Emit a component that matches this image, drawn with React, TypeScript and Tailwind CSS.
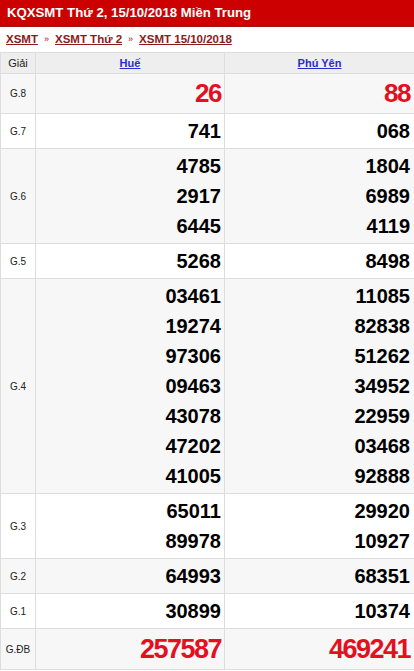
import React from 'react';

type Row = { label: string; hue: string[]; phuyen: string[]; kind?: 'g8' | 'db' };

const rows: Row[] = [
  { label: 'G.8', hue: ['26'], phuyen: ['88'], kind: 'g8' },
  { label: 'G.7', hue: ['741'], phuyen: ['068'] },
  { label: 'G.6', hue: ['4785', '2917', '6445'], phuyen: ['1804', '6989', '4119'] },
  { label: 'G.5', hue: ['5268'], phuyen: ['8498'] },
  {
    label: 'G.4',
    hue: ['03461', '19274', '97306', '09463', '43078', '47202', '41005'],
    phuyen: ['11085', '82838', '51262', '34952', '22959', '03468', '92888'],
  },
  { label: 'G.3', hue: ['65011', '89978'], phuyen: ['29920', '10927'] },
  { label: 'G.2', hue: ['64993'], phuyen: ['68351'] },
  { label: 'G.1', hue: ['30899'], phuyen: ['10374'] },
  { label: 'G.ĐB', hue: ['257587'], phuyen: ['469241'], kind: 'db' },
];

function Numbers({ values, kind }: { values: string[]; kind?: 'g8' | 'db' }) {
  if (kind === 'g8') {
    return <div className="text-[26px] leading-[35px] tracking-[-1.5px] text-[#e3101f] font-bold">{values[0]}</div>;
  }
  if (kind === 'db') {
    return <div className="text-[27px] leading-[36px] tracking-[-1.5px] text-[#e3101f] font-bold">{values[0]}</div>;
  }
  return (
    <>
      {values.map((v) => (
        <div key={v} className="text-[20px] leading-[30px] font-bold text-black">
          {v}
        </div>
      ))}
    </>
  );
}

export default function App() {
  return (
    <div className="w-[414px] bg-white font-['Liberation_Sans',Arial,sans-serif]">
      <div className="h-[27px] bg-[#cc0000] border-b border-[#a31515] px-[7px] flex items-center">
        <h1 className="text-white font-bold text-[13.2px]">KQXSMT Thứ 2, 15/10/2018 Miền Trung</h1>
      </div>

      <div className="h-[25px] px-[6px] flex items-center gap-[6px] text-[11.5px]">
        <a href="#" className="text-[#8b1a1a] underline font-bold">XSMT</a>
        <span className="text-[#8b1a1a] text-[9px]">»</span>
        <a href="#" className="text-[#8b1a1a] underline font-bold">XSMT Thứ 2</a>
        <span className="text-[#8b1a1a] text-[9px]">»</span>
        <a href="#" className="text-[#8b1a1a] underline font-bold">XSMT 15/10/2018</a>
      </div>

      <table className="w-[414px] table-fixed border-collapse">
        <colgroup>
          <col className="w-[35px]" />
          <col className="w-[189px]" />
          <col className="w-[190px]" />
        </colgroup>
        <thead>
          <tr className="bg-[#eeeeee] h-[21px]">
            <th className="border border-[#dddddd] text-[11px] font-normal text-[#222] text-center p-0">Giải</th>
            <th className="border border-[#dddddd] text-[11px] font-bold text-center p-0">
              <a href="#" className="text-[#2a2ad0] underline">Huế</a>
            </th>
            <th className="border border-[#dddddd] text-[11px] font-bold text-center p-0">
              <a href="#" className="text-[#2a2ad0] underline">Phú Yên</a>
            </th>
          </tr>
        </thead>
        <tbody>
          {rows.map((r, i) => (
            <tr key={r.label} className={i % 2 === 0 ? 'bg-[#f7f7f7]' : 'bg-white'}>
              <td className="border border-[#dddddd] text-[10px] text-[#222] text-center py-[2px] px-0">{r.label}</td>
              <td className="border border-[#dddddd] text-right py-[2px] pr-[3px]">
                <Numbers values={r.hue} kind={r.kind} />
              </td>
              <td className="border border-[#dddddd] text-right py-[2px] pr-[4px]">
                <Numbers values={r.phuyen} kind={r.kind} />
              </td>
            </tr>
          ))}
        </tbody>
      </table>
    </div>
  );
}
